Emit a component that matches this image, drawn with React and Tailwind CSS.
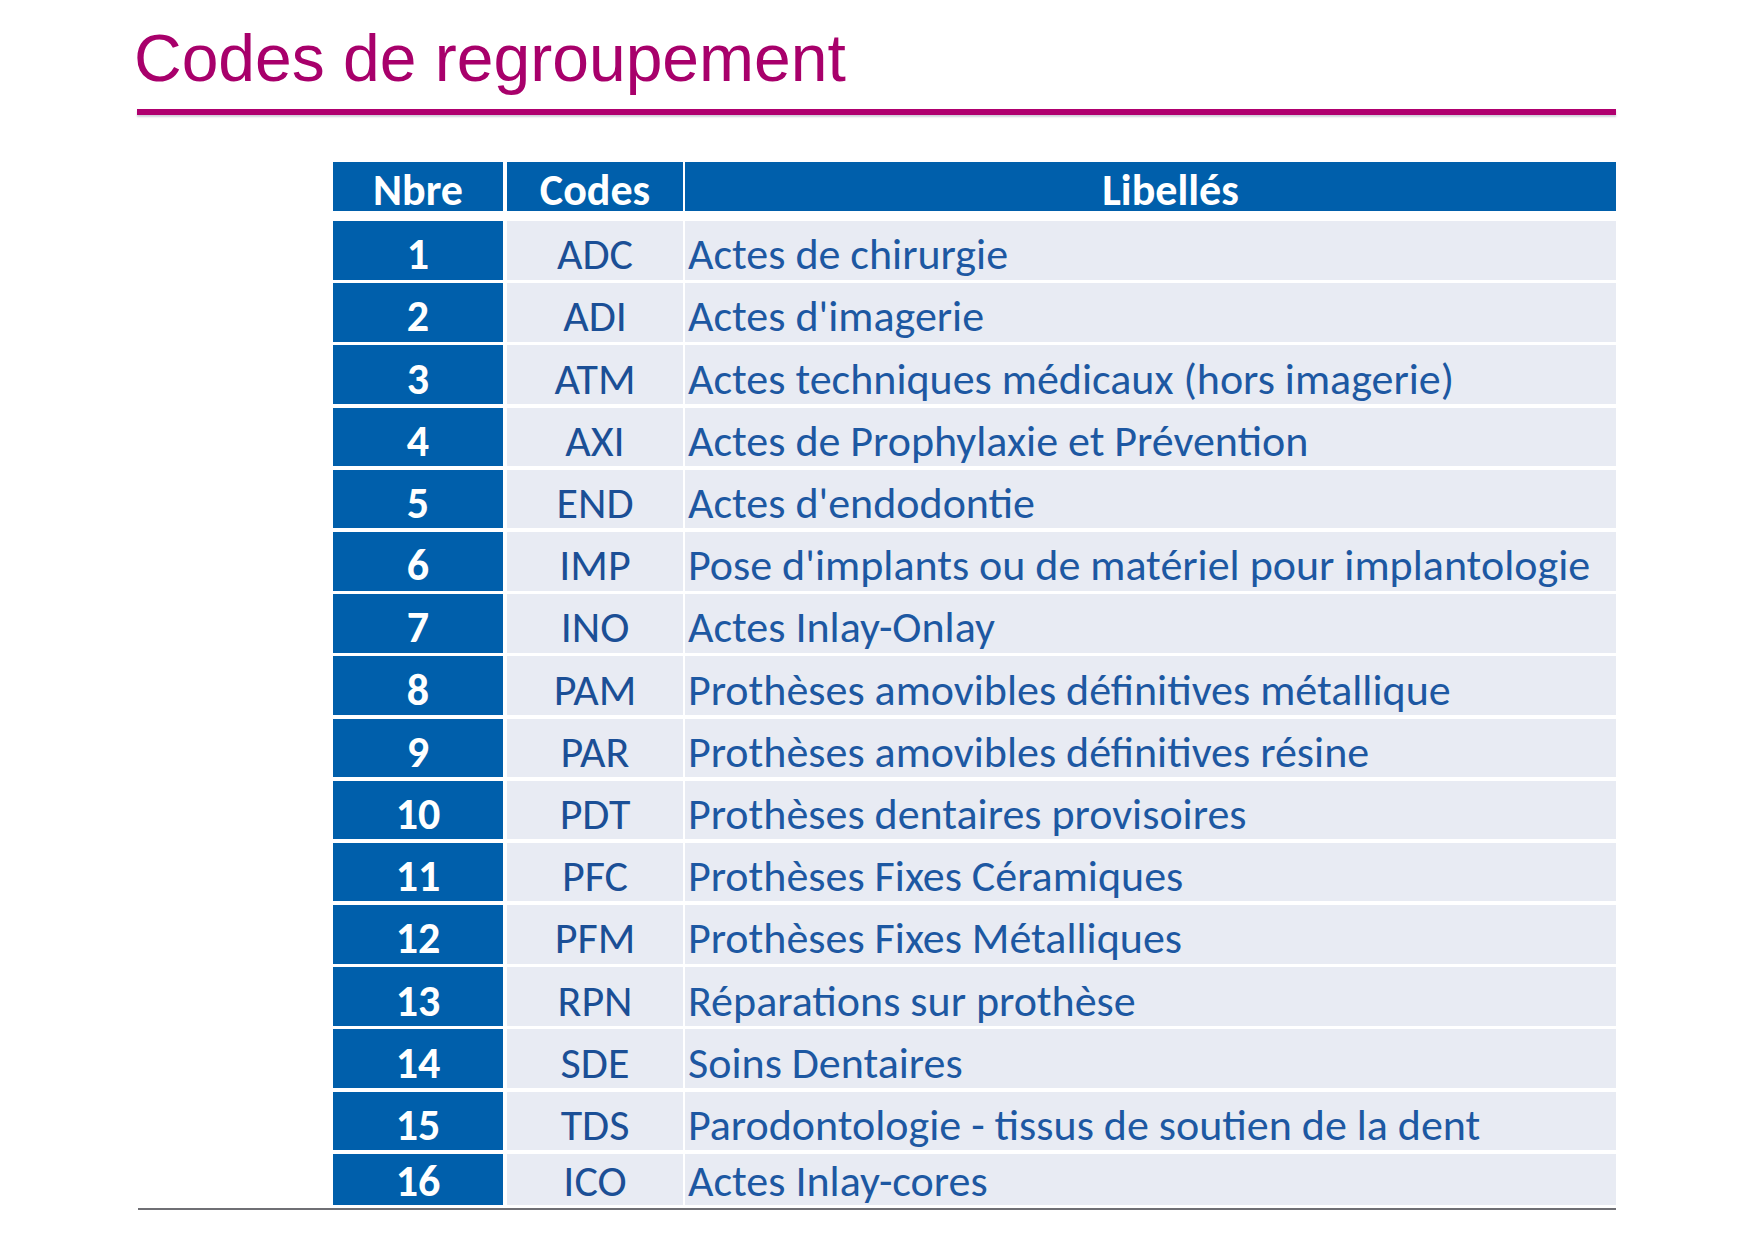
import React from 'react';

const rows = [
    ['1', 'ADC', 'Actes de chirurgie'],
    ['2', 'ADI', "Actes d'imagerie"],
    ['3', 'ATM', 'Actes techniques médicaux (hors imagerie)'],
    ['4', 'AXI', 'Actes de Prophylaxie et Prévention'],
    ['5', 'END', "Actes d'endodontie"],
    ['6', 'IMP', "Pose d'implants ou de matériel pour implantologie"],
    ['7', 'INO', 'Actes Inlay-Onlay'],
    ['8', 'PAM', 'Prothèses amovibles définitives métallique'],
    ['9', 'PAR', 'Prothèses amovibles définitives résine'],
    ['10', 'PDT', 'Prothèses dentaires provisoires'],
    ['11', 'PFC', 'Prothèses Fixes Céramiques'],
    ['12', 'PFM', 'Prothèses Fixes Métalliques'],
    ['13', 'RPN', 'Réparations sur prothèse'],
    ['14', 'SDE', 'Soins Dentaires'],
    ['15', 'TDS', 'Parodontologie - tissus de soutien de la dent'],
    ['16', 'ICO', 'Actes Inlay-cores'],
];

const bodyFont = "font-['Carlito','Calibri','Lato',sans-serif]";

export default function App() {
    return (
        <div className="w-[1754px] h-[1239px] bg-white overflow-hidden">
            {/* Title + magenta rule */}
            <div className="pl-[137px] pr-[138px] pt-[22px]">
                <h1 className="-ml-[3px] whitespace-nowrap font-['Liberation_Sans',Arial,sans-serif] text-[66px] leading-[72px] text-[#a8006b]">
                    Codes de regroupement
                </h1>
                <div className="mt-[15px] h-[6px] bg-[#b0006f] shadow-[0_2px_2px_rgba(120,120,150,0.35)]"></div>
            </div>

            {/* Table */}
            <div className={`ml-[333px] w-[1283px] mt-[47px] ${bodyFont}`}>
                <div className="flex h-[49px] bg-white gap-x-[4px] text-white font-bold text-[44px]">
                    <div className="w-[170px] bg-[#005fab] flex items-center justify-center pt-[6px]">Nbre</div>
                    <div className="flex flex-1 gap-x-[2px]">
                        <div className="w-[176px] bg-[#005fab] flex items-center justify-center pt-[6px]">Codes</div>
                        <div className="flex-1 bg-[#005fab] flex items-center justify-center pt-[6px] pl-[40px]">Libellés</div>
                    </div>
                </div>

                <div className="mt-[10px] flex flex-col gap-y-[3.6px]">
                    {rows.map(([n, code, label], i) => {
                        const last = i === rows.length - 1;
                        const rowH = last ? 'h-[51px]' : 'h-[58.6px]';
                        const pad = last ? 'pt-[4px]' : 'pt-[8px]';
                        return (
                            <div key={n} className={`flex ${rowH} shrink-0 gap-x-[4px] text-[44px]`}>
                                <div className={`w-[170px] bg-[#005fab] text-white font-bold flex items-center justify-center ${pad}`}>
                                    {n}
                                </div>
                                <div className="flex flex-1 gap-x-[2px]">
                                    <div className={`w-[176px] bg-[#e8ebf3] text-[#1b4f96] flex items-center justify-center ${pad}`}>
                                        {code}
                                    </div>
                                    <div className={`flex-1 bg-[#e8ebf3] text-[#1d58a2] flex items-center pl-[3px] whitespace-nowrap ${pad}`}>
                                        {label}
                                    </div>
                                </div>
                            </div>
                        );
                    })}
                </div>
            </div>

            {/* bottom rule */}
            <div className="ml-[138px] w-[1478px] mt-[3px] h-[2px] bg-[#6f6f74]"></div>
        </div>
    );
}
